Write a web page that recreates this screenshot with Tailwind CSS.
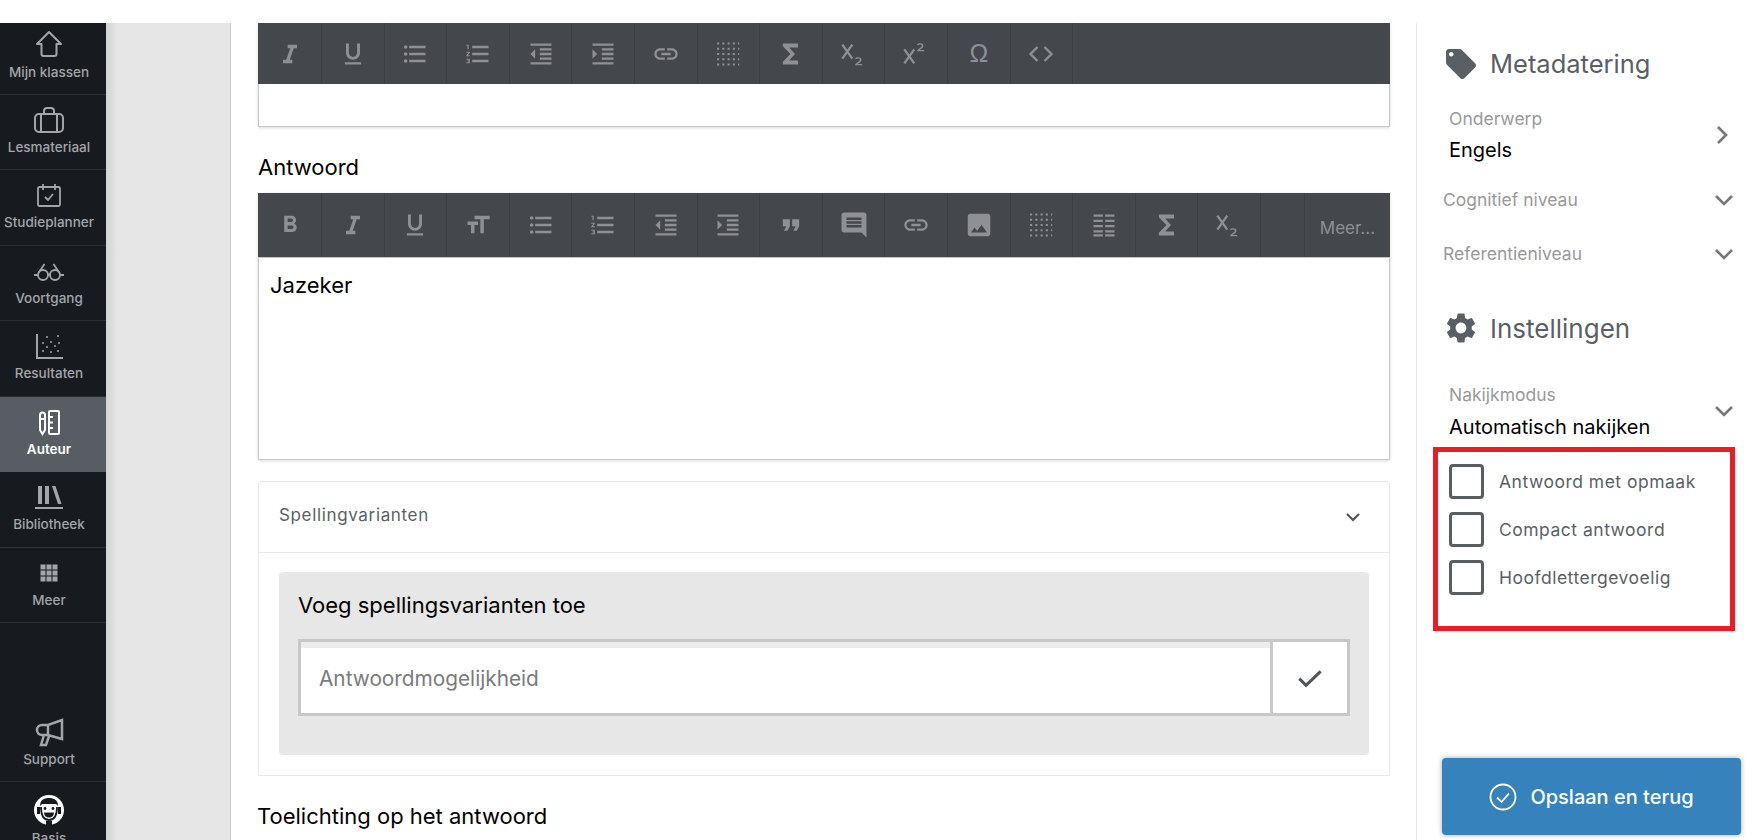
<!DOCTYPE html>
<html lang="nl">
<head>
<meta charset="utf-8">
<title>Auteur</title>
<script src="https://cdn.jsdelivr.net/npm/@tailwindcss/browser@4"></script>
</head>
<body class="m-0 h-[840px] w-[1758px] overflow-hidden bg-white font-['Inter','Liberation_Sans',sans-serif]">
<svg class="hidden" aria-hidden="true">
  <symbol id="bold" viewBox="0 0 24 24"><path d="M15.6 10.79c.97-.67 1.65-1.77 1.65-2.79 0-2.26-1.75-4-4-4H7v14h7.04c2.09 0 3.71-1.7 3.71-3.79 0-1.52-.86-2.82-2.15-3.42zM10 6.5h3c.83 0 1.5.67 1.5 1.5s-.67 1.5-1.5 1.5h-3v-3zm3.5 9H10v-3h3.5c.83 0 1.5.67 1.5 1.5s-.67 1.5-1.5 1.5z"/></symbol>
  <symbol id="italic" viewBox="0 0 24 24"><path d="M10 4v3h2.21l-3.42 10H6v3h8v-3h-2.21l3.42-10H18V4z"/></symbol>
  <symbol id="under" viewBox="0 0 24 24"><path d="M12 17c3.31 0 6-2.69 6-6V3h-2.5v8c0 1.93-1.57 3.5-3.5 3.5S8.5 12.93 8.5 11V3H6v8c0 3.31 2.69 6 6 6zm-7 2v2h14v-2H5z"/></symbol>
  <symbol id="size" viewBox="0 0 24 24"><path d="M9 4v3h5v12h3V7h5V4H9zm-6 8h3v7h3v-7h3V9H3v3z"/></symbol>
  <symbol id="ul" viewBox="0 0 24 24"><path d="M4 10.5c-.83 0-1.5.67-1.5 1.5s.67 1.5 1.5 1.5 1.5-.67 1.5-1.5-.67-1.5-1.5-1.5zm0-6c-.83 0-1.5.67-1.5 1.5S3.17 7.5 4 7.5 5.5 6.83 5.5 6 4.83 4.5 4 4.5zm0 12c-.83 0-1.5.68-1.5 1.5s.68 1.5 1.5 1.5 1.5-.68 1.5-1.5-.67-1.5-1.5-1.5zM7 19h14v-2H7v2zm0-6h14v-2H7v2zm0-8v2h14V5H7z"/></symbol>
  <symbol id="ol" viewBox="0 0 24 24"><path d="M2 17h2v.5H3v1h1v.5H2v1h3v-4H2v1zm1-9h1V4H2v1h1v3zm-1 3h1.8L2 13.1v.9h3v-1H3.2L5 10.9V10H2v1zm5-6v2h14V5H7zm0 14h14v-2H7v2zm0-6h14v-2H7v2z"/></symbol>
  <symbol id="outdent" viewBox="0 0 24 24"><path d="M11 17h10v-2H11v2zm-8-5l4 4V8l-4 4zm0 9h18v-2H3v2zM3 3v2h18V3H3zm8 6h10V7H11v2zm0 4h10v-2H11v2z"/></symbol>
  <symbol id="indent" viewBox="0 0 24 24"><path d="M3 21h18v-2H3v2zM3 8v8l4-4-4-4zm8 9h10v-2H11v2zM3 3v2h18V3H3zm8 6h10V7H11v2zm0 4h10v-2H11v2z"/></symbol>
  <symbol id="link" viewBox="0 0 24 24"><path d="M3.9 12c0-1.71 1.39-3.1 3.1-3.1h4V7H7c-2.76 0-5 2.24-5 5s2.24 5 5 5h4v-1.9H7c-1.71 0-3.1-1.39-3.1-3.1zM8 13h8v-2H8v2zm9-6h-4v1.9h4c1.71 0 3.1 1.39 3.1 3.1s-1.39 3.1-3.1 3.1h-4V17h4c2.76 0 5-2.24 5-5s-2.24-5-5-5z"/></symbol>
  <symbol id="table" viewBox="0 0 24 24"><g fill="none" stroke="currentColor" stroke-width="1.800" stroke-dasharray="1.800 2.700"><path d="M2.600 3h19M2.600 7.500h19M2.600 12h19M2.600 16.500h19M2.600 21h19"/></g></symbol>
  <symbol id="sigma" viewBox="0 0 24 24"><path d="M18 3H5v2.4L11.5 12 5 18.6V21h13v-3.4h-7.6l5-5.6-5-5.6H18z"/></symbol>
  <symbol id="sub" viewBox="0 0 24 24"><path d="M2 4l8.5 12M10.5 4L2 16" fill="none" stroke="currentColor" stroke-width="2"/><path d="M13 21.500c0-2 4-3 4-4.600 0-1.300-2.500-1.300-3.500-.3l-.6-1c1.400-1.300 5.500-1.300 5.500 1.300 0 2-2.600 2.900-3.500 3.600H19v1.200h-6z"/></symbol>
  <symbol id="sup" viewBox="0 0 24 24"><path d="M2 8l8.500 12M10.500 8L2 20" fill="none" stroke="currentColor" stroke-width="2"/><path d="M13 9.500c0-2 4-3 4-4.600 0-1.300-2.500-1.300-3.500-.3l-.6-1c1.400-1.300 5.500-1.300 5.500 1.300 0 2-2.600 2.900-3.500 3.600H19v1.200h-6z"/></symbol>
  <symbol id="code" viewBox="0 0 24 24"><path d="M9 6l-6 6 6 6M15 6l6 6-6 6" fill="none" stroke="currentColor" stroke-width="2"/></symbol>
  <symbol id="quote" viewBox="0 0 24 24"><path d="M6 17h3l2-4V7H5v6h3zm8 0h3l2-4V7h-6v6h3z"/></symbol>
  <symbol id="comment" viewBox="0 0 24 24"><path d="M21.99 4c0-1.100-.89-2-1.990-2H4c-1.100 0-2 .9-2 2v12c0 1.100.9 2 2 2h14l4 4-.01-18zM18 14H6v-2h12v2zm0-3H6V9h12v2zm0-3H6V6h12v2z"/></symbol>
  <symbol id="image" viewBox="0 0 24 24"><path fill-rule="evenodd" d="M21 19V5c0-1.100-.9-2-2-2H5c-1.100 0-2 .9-2 2v14c0 1.100.9 2 2 2h14c1.100 0 2-.9 2-2zM5.500 18l3-4 2 2.500 3.500-4.500 4.500 6z"/></symbol>
  <symbol id="cols" viewBox="0 0 24 24"><path d="M3 3h8v2H3zM13 3h8v2h-8zM3 7.500h8v2H3zM13 7.500h8v2h-8zM3 12h8v2H3zM13 12h8v2h-8zM3 16.500h8v2H3zM13 16.500h8v2h-8zM3 20h8v1.800H3zM13 20h8v1.800h-8z"/></symbol>
</svg>

<div class="flex h-[840px] pt-[23px]">
  <!-- Navigation -->
  <nav class="flex h-[817px] w-[106px] shrink-0 flex-col overflow-hidden bg-[#171b20] text-[13.500px] leading-none font-medium text-[#a3a5a8]">
    <a class="-mt-[4px] flex h-[75.500px] shrink-0 flex-col items-center border-b border-[#2b2f35] pt-[9px] pr-[8px]">
      <svg class="h-[32px] w-[32px]" viewBox="0 0 32 32" fill="none" stroke="#a3a5a8" stroke-width="2"><path d="M4 16L16 4l12 12h-4.500v10a2 2 0 0 1-2 2h-11a2 2 0 0 1-2-2V16z" stroke-linejoin="round"/></svg>
      <span class="mt-[6px]">Mijn klassen</span>
    </a>
    <a class="flex h-[75.500px] shrink-0 flex-col items-center border-b border-[#2b2f35] pt-[9px] pr-[8px]">
      <svg class="h-[32px] w-[32px]" viewBox="0 0 32 32" fill="none" stroke="#a3a5a8" stroke-width="2"><rect x="2" y="10" width="28" height="18" rx="4"/><path d="M11 10V7a3 3 0 0 1 3-3h4a3 3 0 0 1 3 3v3M8 10v18M24 10v18"/></svg>
      <span class="mt-[5px]">Lesmateriaal</span>
    </a>
    <a class="flex h-[75.500px] shrink-0 flex-col items-center border-b border-[#2b2f35] pt-[9px] pr-[8px]">
      <svg class="h-[32px] w-[32px]" viewBox="0 0 32 32" fill="none" stroke="#a3a5a8" stroke-width="1.800"><rect x="5" y="8" width="22" height="19" rx="1.500"/><path d="M10 5v6M22 5v6M12 18l3 3 5-6"/></svg>
      <span class="mt-[5px]">Studieplanner</span>
    </a>
    <a class="flex h-[75.500px] shrink-0 flex-col items-center border-b border-[#2b2f35] pt-[9px] pr-[8px]">
      <svg class="h-[32px] w-[32px]" viewBox="0 0 32 32" fill="none" stroke="#a3a5a8" stroke-width="1.800"><circle cx="10" cy="20" r="5"/><circle cx="22" cy="20" r="5"/><path d="M15 19.500h2M5 20H1M27 20h4M5.500 18l6-9M26.500 18l-6-9"/></svg>
      <span class="mt-[5px]">Voortgang</span>
    </a>
    <a class="flex h-[75.500px] shrink-0 flex-col items-center border-b border-[#2b2f35] pt-[9px] pr-[8px]">
      <svg class="h-[32px] w-[32px]" viewBox="0 0 32 32" fill="none" stroke="#a3a5a8"><path d="M4 4v24h26" stroke-width="2"/><g stroke="none" fill="#a3a5a8"><circle cx="14" cy="7" r="1"/><circle cx="25" cy="6" r="1"/><circle cx="10" cy="13" r="1"/><circle cx="18" cy="12" r="1"/><circle cx="26" cy="13" r="1"/><circle cx="14" cy="17" r="1"/><circle cx="22" cy="16" r="1"/><circle cx="10" cy="21" r="1"/><circle cx="18" cy="22" r="1"/><circle cx="25" cy="21" r="1"/></g></svg>
      <span class="mt-[5px]">Resultaten</span>
    </a>
    <a class="flex h-[75.500px] shrink-0 flex-col items-center bg-[#585c63] pt-[9px] pr-[8px] font-semibold text-white">
      <svg class="h-[32px] w-[32px]" viewBox="0 0 32 32" fill="none" stroke="#fff" stroke-width="2"><path d="M7 9a2.500 2.500 0 0 1 5 0v15l-2.500 4L7 24zM7 13h5"/><rect x="16" y="5" width="10" height="23" rx="1"/><path d="M16 11h4M16 16.500h4M16 22h4"/></svg>
      <span class="mt-[5px]">Auteur</span>
    </a>
    <a class="flex h-[75.500px] shrink-0 flex-col items-center border-b border-[#2b2f35] pt-[9px] pr-[8px]">
      <svg class="h-[32px] w-[32px]" viewBox="0 0 32 32" fill="#a3a5a8"><rect x="5" y="5" width="4" height="18"/><rect x="12" y="5" width="4" height="18"/><path d="M19 5h3.500l6 18H25zM2 26h28v2H2z"/></svg>
      <span class="mt-[5px]">Bibliotheek</span>
    </a>
    <a class="flex h-[75.500px] shrink-0 flex-col items-center border-b border-[#2b2f35] pt-[9px] pr-[8px]">
      <svg class="h-[32px] w-[32px]" viewBox="0 0 32 32" fill="#a3a5a8"><path d="M7.500 7.500h5v5h-5zM13.500 7.500h5v5h-5zM19.500 7.500h5v5h-5zM7.500 13.500h5v5h-5zM13.500 13.500h5v5h-5zM19.500 13.500h5v5h-5zM7.500 19.500h5v5h-5zM13.500 19.500h5v5h-5zM19.500 19.500h5v5h-5z"/></svg>
      <span class="mt-[5px]">Meer</span>
    </a>
    <a class="mt-[83.500px] flex h-[75.500px] shrink-0 flex-col items-center border-b border-[#2b2f35] pt-[9px] pr-[8px]">
      <svg class="h-[32px] w-[32px]" viewBox="0 0 32 32" fill="none" stroke="#a3a5a8" stroke-width="2.500"><path d="M29 4v19l-14-4H9a5 5 0 0 1 0-10h6zM15 9v10M11 19l-3 10h5l3-9"/></svg>
      <span class="mt-[5px]">Support</span>
    </a>
    <a class="flex h-[75.500px] shrink-0 flex-col items-center pt-[12px] pr-[8px]">
      <svg class="h-[32px] w-[32px]" viewBox="0 0 32 32"><circle cx="16" cy="16" r="15" fill="#fff"/><path d="M7 12c0-6 4-8 9-8s9 2 9 8l-2-2H9z" fill="#171b20"/><path d="M8 13c0 9 3 13 8 13s8-4 8-13" fill="none" stroke="#171b20" stroke-width="1.800"/><circle cx="12" cy="14.500" r="1.400" fill="#171b20"/><circle cx="20" cy="14.500" r="1.400" fill="#171b20"/><path d="M11 18.500h10c0 3-2 5-5 5s-5-2-5-5z" fill="#171b20"/><path d="M4 13h3v7H4zM25 13h3v7h-3zM13 27h6v4h-6z" fill="#171b20"/></svg>
      <span class="mt-[6px]">Basis</span>
    </a>
  </nav>

  <!-- Empty column -->
  <div class="h-[817px] w-[125px] shrink-0 border-r border-[#c9c9c9] bg-linear-to-r from-[#d4d4d4] to-[#e6e6e6] to-[10%]"></div>

  <!-- Editor column -->
  <main class="h-[817px] w-[1185px] shrink-0 overflow-hidden pr-[26px] pl-[27px]">
    <section class="border-x border-b border-[#c8c8c8] shadow-[0_1px_3px_rgba(0,0,0,0.15)]">
      <div class="-mx-px flex h-[61px] bg-[#44474c] text-[#8e9094]">
        <span class="flex w-[64px] items-center justify-center border-r border-[#3b3e43]"><svg class="h-7 w-7 fill-current"><use href="#italic"/></svg></span>
        <span class="flex w-[62.600px] items-center justify-center border-r border-[#3b3e43]"><svg class="h-7 w-7 fill-current"><use href="#under"/></svg></span>
        <span class="flex w-[62.600px] items-center justify-center border-r border-[#3b3e43]"><svg class="h-7 w-7 fill-current"><use href="#ul"/></svg></span>
        <span class="flex w-[62.600px] items-center justify-center border-r border-[#3b3e43]"><svg class="h-7 w-7 fill-current"><use href="#ol"/></svg></span>
        <span class="flex w-[62.600px] items-center justify-center border-r border-[#3b3e43]"><svg class="h-7 w-7 fill-current"><use href="#outdent"/></svg></span>
        <span class="flex w-[62.600px] items-center justify-center border-r border-[#3b3e43]"><svg class="h-7 w-7 fill-current"><use href="#indent"/></svg></span>
        <span class="flex w-[62.600px] items-center justify-center border-r border-[#3b3e43]"><svg class="h-7 w-7 fill-current"><use href="#link"/></svg></span>
        <span class="flex w-[62.600px] items-center justify-center border-r border-[#3b3e43]"><svg class="h-7 w-7 fill-current"><use href="#table"/></svg></span>
        <span class="flex w-[62.600px] items-center justify-center border-r border-[#3b3e43]"><svg class="h-7 w-7 fill-current"><use href="#sigma"/></svg></span>
        <span class="flex w-[62.600px] items-center justify-center border-r border-[#3b3e43]"><svg class="h-7 w-7 fill-current"><use href="#sub"/></svg></span>
        <span class="flex w-[62.600px] items-center justify-center border-r border-[#3b3e43]"><svg class="h-7 w-7 fill-current"><use href="#sup"/></svg></span>
        <span class="flex w-[62.600px] items-center justify-center border-r border-[#3b3e43] font-['Liberation_Sans',sans-serif] text-[25px]">Ω</span>
        <span class="flex w-[62.600px] items-center justify-center border-r border-[#3b3e43]"><svg class="h-7 w-7 fill-current"><use href="#code"/></svg></span>
      </div>
      <div class="h-[42px] bg-white"></div>
    </section>

    <h2 class="mt-[27px] mb-[12px] text-[22px] leading-[27px] font-normal text-black">Antwoord</h2>

    <section class="border-x border-b border-[#c8c8c8] shadow-[0_1px_3px_rgba(0,0,0,0.15)]">
      <div class="-mx-px flex h-[65px] border-b border-[#c8c8c8] bg-[#44474c] text-[#8e9094]">
        <span class="flex w-[64px] items-center justify-center border-r border-[#3b3e43]"><svg class="h-7 w-7 fill-current"><use href="#bold"/></svg></span>
        <span class="flex w-[62.600px] items-center justify-center border-r border-[#3b3e43]"><svg class="h-7 w-7 fill-current"><use href="#italic"/></svg></span>
        <span class="flex w-[62.600px] items-center justify-center border-r border-[#3b3e43]"><svg class="h-7 w-7 fill-current"><use href="#under"/></svg></span>
        <span class="flex w-[62.600px] items-center justify-center border-r border-[#3b3e43]"><svg class="h-7 w-7 fill-current"><use href="#size"/></svg></span>
        <span class="flex w-[62.600px] items-center justify-center border-r border-[#3b3e43]"><svg class="h-7 w-7 fill-current"><use href="#ul"/></svg></span>
        <span class="flex w-[62.600px] items-center justify-center border-r border-[#3b3e43]"><svg class="h-7 w-7 fill-current"><use href="#ol"/></svg></span>
        <span class="flex w-[62.600px] items-center justify-center border-r border-[#3b3e43]"><svg class="h-7 w-7 fill-current"><use href="#outdent"/></svg></span>
        <span class="flex w-[62.600px] items-center justify-center border-r border-[#3b3e43]"><svg class="h-7 w-7 fill-current"><use href="#indent"/></svg></span>
        <span class="flex w-[62.600px] items-center justify-center border-r border-[#3b3e43]"><svg class="h-7 w-7 fill-current"><use href="#quote"/></svg></span>
        <span class="flex w-[62.600px] items-center justify-center border-r border-[#3b3e43]"><svg class="h-[30px] w-[30px] fill-current"><use href="#comment"/></svg></span>
        <span class="flex w-[62.600px] items-center justify-center border-r border-[#3b3e43]"><svg class="h-7 w-7 fill-current"><use href="#link"/></svg></span>
        <span class="flex w-[62.600px] items-center justify-center border-r border-[#3b3e43]"><svg class="h-[30px] w-[30px] fill-current"><use href="#image"/></svg></span>
        <span class="flex w-[62.600px] items-center justify-center border-r border-[#3b3e43]"><svg class="h-7 w-7 fill-current"><use href="#table"/></svg></span>
        <span class="flex w-[62.600px] items-center justify-center border-r border-[#3b3e43]"><svg class="h-7 w-7 fill-current"><use href="#cols"/></svg></span>
        <span class="flex w-[62.600px] items-center justify-center border-r border-[#3b3e43]"><svg class="h-7 w-7 fill-current"><use href="#sigma"/></svg></span>
        <span class="flex w-[62.600px] items-center justify-center border-r border-[#3b3e43]"><svg class="h-7 w-7 fill-current"><use href="#sub"/></svg></span>
        <span class="w-[44px] border-r border-[#3b3e43]"></span>
        <span class="flex flex-1 items-center justify-center pt-[8px] text-[17px]">Meer...</span>
      </div>
      <div class="h-[201px] bg-white px-[11px] pt-[14px] text-[22px] leading-[27px] text-black">Jazeker</div>
    </section>

    <section class="mt-[21px] h-[295px] rounded-t-[4px] border border-[#e8e8e8]">
      <div class="flex h-[71px] items-center justify-between border-b border-[#e8e8e8] pr-[27px] pl-[20px]">
        <span class="-mt-[2px] text-[17px] tracking-[0.65px] text-[#5a5f66]">Spellingvarianten</span>
        <svg class="h-[18px] w-[18px]" viewBox="0 0 18 18" fill="none" stroke="#50555c" stroke-width="2.200"><path d="M3 6l6 6 6-6"/></svg>
      </div>
      <div class="mx-[20px] mt-[19px] h-[183px] rounded-[4px] bg-[#e7e7e7] px-[19px] pt-[20px]">
        <h3 class="text-[22px] leading-[27px] font-normal text-black">Voeg spellingsvarianten toe</h3>
        <div class="mt-[20px] flex h-[77px] border-[3px] border-[#c8c8c8] bg-white">
          <div class="flex flex-1 items-center border-r-[3px] border-[#c8c8c8] bg-white pt-[2px] pl-[18px] text-[20.800px] text-[#7b7b7b] shadow-[inset_0_6px_0_#ececec]">Antwoordmogelijkheid</div>
          <div class="flex w-[74px] items-center justify-center">
            <svg class="h-[32px] w-[32px]" viewBox="0 0 24 24" fill="none" stroke="#50555c" stroke-width="2.300"><path d="M4 12.500l5 5L20 7"/></svg>
          </div>
        </div>
      </div>
    </section>

    <h2 class="-ml-px mt-[27px] text-[22px] leading-[27px] font-normal text-black">Toelichting op het antwoord</h2>
  </main>

  <!-- Right panel -->
  <aside class="relative h-[817px] flex-1 border-l border-[#e6e6e6] pl-[26px]">
    <div class="mt-[24px] flex h-[34px] items-center gap-[11px] text-[#5a5f66]">
      <svg class="h-[36px] w-[36px] fill-current" viewBox="0 0 24 24"><path d="M21.410 11.580l-9-9C12.050 2.220 11.550 2 11 2H4c-1.100 0-2 .9-2 2v7c0 .55.22 1.050.59 1.420l9 9c.36.36.86.58 1.410.58.55 0 1.050-.22 1.410-.59l7-7c.37-.36.59-.86.59-1.410 0-.55-.23-1.060-.59-1.420zM5.500 7C4.670 7 4 6.330 4 5.500S4.670 4 5.500 4 7 4.670 7 5.500 6.330 7 5.500 7z"/></svg>
      <h2 class="text-[25.500px] font-normal">Metadatering</h2>
    </div>

    <div class="mt-[27px] flex items-center justify-between pr-[25px] pl-[6px]">
      <div>
        <p class="text-[17.500px] leading-[22px] text-[#999]">Onderwerp</p>
        <p class="mt-[9px] text-[20px] leading-[22px] text-black">Engels</p>
      </div>
      <svg class="h-[22px] w-[22px]" viewBox="0 0 22 22" fill="none" stroke="#777" stroke-width="2.600"><path d="M7 3l8 8-8 8"/></svg>
    </div>
    <div class="mt-[28px] flex items-center justify-between pr-[23px]">
      <span class="text-[17.500px] leading-[22px] text-[#999]">Cognitief niveau</span>
      <svg class="h-[22px] w-[22px]" viewBox="0 0 22 22" fill="none" stroke="#777" stroke-width="2.600"><path d="M3 7l8 8 8-8"/></svg>
    </div>
    <div class="mt-[32px] flex items-center justify-between pr-[23px]">
      <span class="text-[17.500px] leading-[22px] text-[#999]">Referentieniveau</span>
      <svg class="h-[22px] w-[22px]" viewBox="0 0 22 22" fill="none" stroke="#777" stroke-width="2.600"><path d="M3 7l8 8 8-8"/></svg>
    </div>

    <div class="mt-[46px] flex h-[34px] items-center gap-[11px] text-[#5a5f66]">
      <svg class="h-[36px] w-[36px] fill-current" viewBox="0 0 24 24"><path d="M19.140 12.940c.04-.3.06-.61.06-.94 0-.32-.02-.64-.07-.94l2.030-1.580c.18-.14.23-.41.12-.61l-1.920-3.320c-.12-.22-.37-.29-.59-.22l-2.390.96c-.5-.38-1.030-.7-1.620-.94l-.36-2.540c-.04-.24-.24-.41-.48-.41h-3.840c-.24 0-.43.17-.47.41l-.36 2.540c-.59.24-1.130.57-1.620.94l-2.390-.96c-.22-.08-.47 0-.59.22L2.740 8.870c-.12.21-.08.47.12.61l2.030 1.580c-.05.3-.09.63-.09.94s.02.64.07.94l-2.030 1.580c-.18.14-.23.41-.12.61l1.920 3.320c.12.22.37.29.59.22l2.390-.96c.5.38 1.030.7 1.620.94l.36 2.540c.05.24.24.41.48.41h3.840c.24 0 .44-.17.47-.41l.36-2.540c.59-.24 1.130-.56 1.620-.94l2.390.96c.22.08.47 0 .59-.22l1.920-3.320c.12-.22.07-.47-.12-.61l-2.010-1.580zM12 15.600c-1.980 0-3.600-1.620-3.600-3.600s1.620-3.600 3.600-3.600 3.600 1.620 3.600 3.600-1.620 3.600-3.600 3.600z"/></svg>
      <h2 class="text-[26px] font-normal">Instellingen</h2>
    </div>

    <div class="mt-[38.500px] flex items-center justify-between pr-[23px] pl-[6px]">
      <div>
        <p class="text-[17.500px] leading-[22px] text-[#999]">Nakijkmodus</p>
        <p class="mt-[10px] text-[20px] leading-[22px] text-black">Automatisch nakijken</p>
      </div>
      <svg class="h-[22px] w-[22px]" viewBox="0 0 22 22" fill="none" stroke="#777" stroke-width="2.600"><path d="M3 7l8 8 8-8"/></svg>
    </div>

    <div class="mt-[9px] -ml-[10px] flex h-[184px] w-[302px] flex-col gap-[13px] border-[5px] border-[#ed1c24] pt-[12px] pl-[11px]">
      <label class="flex h-[35px] items-center gap-[15px] text-[17.500px] tracking-[0.5px] text-[#5a5f66]"><span class="h-[35px] w-[35px] rounded-[4px] border-[3px] border-[#585c63]"></span><span class="mt-[2px]">Antwoord met opmaak</span></label>
      <label class="flex h-[35px] items-center gap-[15px] text-[17.500px] tracking-[0.5px] text-[#5a5f66]"><span class="h-[35px] w-[35px] rounded-[4px] border-[3px] border-[#585c63]"></span><span class="mt-[2px]">Compact antwoord</span></label>
      <label class="flex h-[35px] items-center gap-[15px] text-[17.500px] tracking-[0.5px] text-[#5a5f66]"><span class="h-[35px] w-[35px] rounded-[4px] border-[3px] border-[#585c63]"></span><span class="mt-[2px]">Hoofdlettergevoelig</span></label>
    </div>

    <button class="absolute top-[735px] left-[25px] flex h-[77px] w-[299px] items-center justify-center gap-[13px] rounded-[4px] bg-[#3682bd] text-[20px] font-medium text-white shadow-[0_0_5px_rgba(0,0,0,0.35)]">
      <svg class="h-[28px] w-[28px]" viewBox="0 0 28 28" fill="none" stroke="#fff" stroke-width="1.800"><circle cx="14" cy="14" r="12.500"/><path d="M8 14.500l4.500 4.500L20 10.500"/></svg>
      Opslaan en terug
    </button>
  </aside>
</div>
</body>
</html>
